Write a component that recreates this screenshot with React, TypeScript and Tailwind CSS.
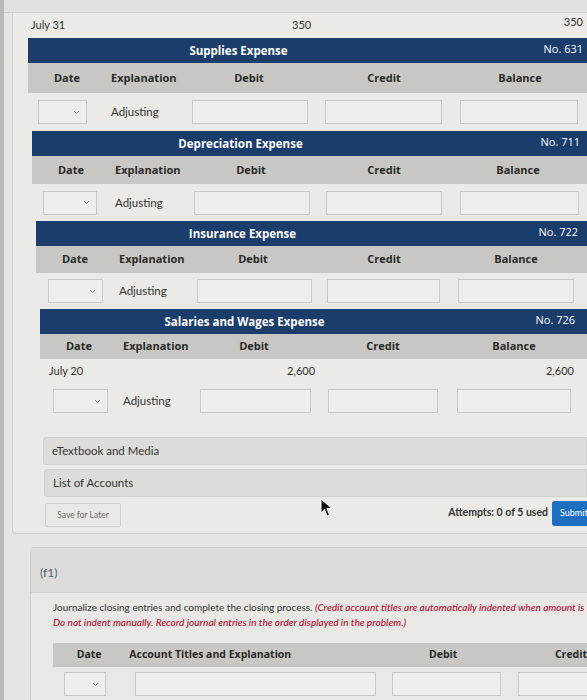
import React from "react";

const Select = ({ w }: { w: string }) => (
  <div className={`${w} h-[24px] border border-[#c9c8c4] bg-[#eeede9] flex items-center justify-end pr-[6px]`}>
    <svg width="7" height="5" viewBox="0 0 7 5"><path d="M1 1 L3.5 3.5 L6 1" fill="none" stroke="#8a8a88" strokeWidth="1" /></svg>
  </div>
);

const Box = ({ w }: { w: string }) => (
  <div className={`${w} h-[24px] border border-[#c9c8c4] bg-[#eeede9] shrink-0`} />
);

type Cfg = {
  title: string;
  no: string;
  ml: string;
  noR: string;
  gray: string;
  row: string;
  hDebit: string;
  hCredit: string;
  hBal: string;
  selPl: string;
  selW: string;
  adjW: string;
  dW: string;
  cMl: string;
  cW: string;
  bMl: string;
  bW: string;
};

const Block = ({ c, extra }: { c: Cfg; extra?: React.ReactNode }) => (
  <div className={`${c.ml} flex flex-col`}>
    <div className="h-[25px] bg-[#1b3d6c] flex items-center text-white font-['Open_Sans'] relative">
      <div className="flex-1 text-center font-bold text-[11.5px] pr-[138px]">{c.title}</div>
      <div className={`absolute ${c.noR} top-[3px] text-[11px]`}>{c.no}</div>
    </div>
    <div className={`${c.gray} bg-[#c8c7c3] flex items-center text-[11px] font-['Open_Sans'] font-bold text-[#2a2a2a]`}>
      <div className="w-[78px] shrink-0 text-center">Date</div>
      <div className="w-[82px] shrink-0 pl-[5px]">Explanation</div>
      <div className={`${c.hDebit} shrink-0 text-center`}>Debit</div>
      <div className={`${c.hCredit} shrink-0 text-center`}>Credit</div>
      <div className={`${c.hBal} shrink-0 text-center`}>Balance</div>
    </div>
    {extra}
    <div className={`${c.row} flex items-center text-[11.5px] text-[#333]`}>
      <div className={`${c.selPl} w-[83px] shrink-0`}><Select w={c.selW} /></div>
      <div className={`${c.adjW} shrink-0`}>Adjusting</div>
      <Box w={c.dW} />
      <div className={c.cMl}><Box w={c.cW} /></div>
      <div className={c.bMl}><Box w={c.bW} /></div>
    </div>
  </div>
);

const b1: Cfg = {
  title: "Supplies Expense", no: "No. 631", ml: "ml-[15px]", noR: "right-[4px]", gray: "h-[30px]", row: "h-[38px]",
  hDebit: "w-[122px]", hCredit: "w-[148px]", hBal: "w-[124px]",
  selPl: "pl-[10px]", selW: "w-[49px]", adjW: "w-[81px]", dW: "w-[116px]", cMl: "ml-[17px]", cW: "w-[117px]", bMl: "ml-[18px]", bW: "w-[118px]",
};
const b2: Cfg = {
  title: "Depreciation Expense", no: "No. 711", ml: "ml-[19px]", noR: "right-[7px]", gray: "h-[28px]", row: "h-[37px]",
  hDebit: "w-[118px]", hCredit: "w-[148px]", hBal: "w-[120px]",
  selPl: "pl-[11px]", selW: "w-[54px]", adjW: "w-[79px]", dW: "w-[116px]", cMl: "ml-[16px]", cW: "w-[116px]", bMl: "ml-[18px]", bW: "w-[119px]",
};
const b3: Cfg = {
  title: "Insurance Expense", no: "No. 722", ml: "ml-[23px]", noR: "right-[9px]", gray: "h-[27px]", row: "h-[36px]",
  hDebit: "w-[114px]", hCredit: "w-[148px]", hBal: "w-[116px]",
  selPl: "pl-[12px]", selW: "w-[55px]", adjW: "w-[78px]", dW: "w-[115px]", cMl: "ml-[15px]", cW: "w-[113px]", bMl: "ml-[18px]", bW: "w-[116px]",
};
const b4: Cfg = {
  title: "Salaries and Wages Expense", no: "No. 726", ml: "ml-[27px]", noR: "right-[12px]", gray: "h-[25px]", row: "h-[36px]",
  hDebit: "w-[108px]", hCredit: "w-[150px]", hBal: "w-[112px]",
  selPl: "pl-[13px]", selW: "w-[55px]", adjW: "w-[77px]", dW: "w-[111px]", cMl: "ml-[17px]", cW: "w-[110px]", bMl: "ml-[19px]", bW: "w-[114px]",
};

export default function App() {
  return (
    <div className="w-[587px] h-[700px] overflow-hidden bg-[#e6e5e1] font-['Lato',sans-serif] relative flex">
      <div className="w-[4px] h-full bg-[#b9b8b4] shrink-0" />
      <div className="flex-1 flex flex-col min-w-0">
        <div className="h-[13px] bg-[#e2e1dd] border-b border-[#cfceca] shrink-0" />
        <div className="ml-[8px] border-l border-b border-[#d2d1cd] rounded-bl-[4px] bg-[#ebeae6] flex flex-col pb-[6px]">
          <div className="h-[25px] flex items-center text-[11px] text-[#333] relative">
            <span className="ml-[18px]">July 31</span>
            <span className="absolute left-[279px]">350</span>
            <span className="absolute right-[4px] top-[1px]">350</span>
          </div>
          <Block c={b1} />
          <Block c={b2} />
          <Block c={b3} />
          <Block
            c={b4}
            extra={
              <div className="h-[24px] flex items-center text-[11px] text-[#333] relative">
                <span className="ml-[9px]">July 20</span>
                <span className="absolute left-[247px]">2,600</span>
                <span className="absolute right-[13px]">2,600</span>
              </div>
            }
          />
          <div className="h-[18px]" />
          <div className="ml-[30px] h-[28px] bg-[#dddcd8] border border-[#d0cfcb] rounded-l-[3px] flex items-center pl-[8px] text-[11.5px] text-[#333]">eTextbook and Media</div>
          <div className="ml-[31px] mt-[4px] h-[28px] bg-[#dddcd8] border border-[#d0cfcb] rounded-l-[3px] flex items-center pl-[8px] text-[11.5px] text-[#333]">List of Accounts</div>
          <div className="ml-[32px] mt-[6px] flex items-center justify-between">
            <div className="w-[76px] h-[24px] border border-[#d0cfcb] bg-[#e9e8e4] rounded-[2px] flex items-center justify-center text-[8.5px] text-[#6a6a6a]">Save for Later</div>
            <div className="flex items-center -mt-[4px]">
              <span className="text-[10.5px] font-bold text-[#333] mr-[4px]">Attempts: 0 of 5 used</span>
              <div className="w-[35px] h-[25px] bg-[#1c6fc1] rounded-l-[3px] flex items-center pl-[8px] text-[9px] text-white overflow-hidden">Submit</div>
            </div>
          </div>
        </div>
        <div className="h-[13px] shrink-0" />
        <div className="ml-[26px] border-l border-t border-[#d2d1cd] rounded-tl-[4px] flex flex-col flex-1">
          <div className="h-[45px] bg-[#dedcd8] border-b border-[#d2d1cd] flex items-center pl-[9px] pt-[6px] text-[12px] text-[#4d5f86]">(f1)</div>
          <div className="bg-[#e9e8e4] flex-1 pl-[22px] overflow-hidden">
            <div className="mt-[7px] text-[10px] leading-[15px] text-[#333] whitespace-nowrap">
              Journalize closing entries and complete the closing process. <span className="italic font-semibold text-[#b3223c]">(Credit account titles are automatically indented when amount is</span>
              <br />
              <span className="italic font-semibold text-[#b3223c]">Do not indent manually. Record journal entries in the order displayed in the problem.)</span>
            </div>
            <div className="mt-[13px] h-[24px] bg-[#c8c7c3] flex items-center text-[10.5px] font-['Open_Sans'] font-bold text-[#2a2a2a]">
              <div className="w-[73px] text-center">Date</div>
              <div className="w-[296px] pl-[4px]">Account Titles and Explanation</div>
              <div className="w-[50px] text-center">Debit</div>
              <div className="flex-1 pl-[87px]">Credit</div>
            </div>
            <div className="mt-[5px] flex items-center">
              <div className="ml-[11px]"><Select w="w-[42px]" /></div>
              <div className="ml-[29px]"><Box w="w-[241px]" /></div>
              <div className="ml-[16px]"><Box w="w-[109px]" /></div>
              <div className="ml-[17px]"><Box w="w-[80px]" /></div>
            </div>
          </div>
        </div>
      </div>
      <svg className="absolute left-[320px] top-[498px]" width="14" height="20" viewBox="0 0 14 20">
        <path d="M1 1 L1 15 L4.5 11.5 L7 18 L9.5 17 L7 10.5 L12 10.5 Z" fill="#111" stroke="#fff" strokeWidth="1" />
      </svg>
    </div>
  );
}
